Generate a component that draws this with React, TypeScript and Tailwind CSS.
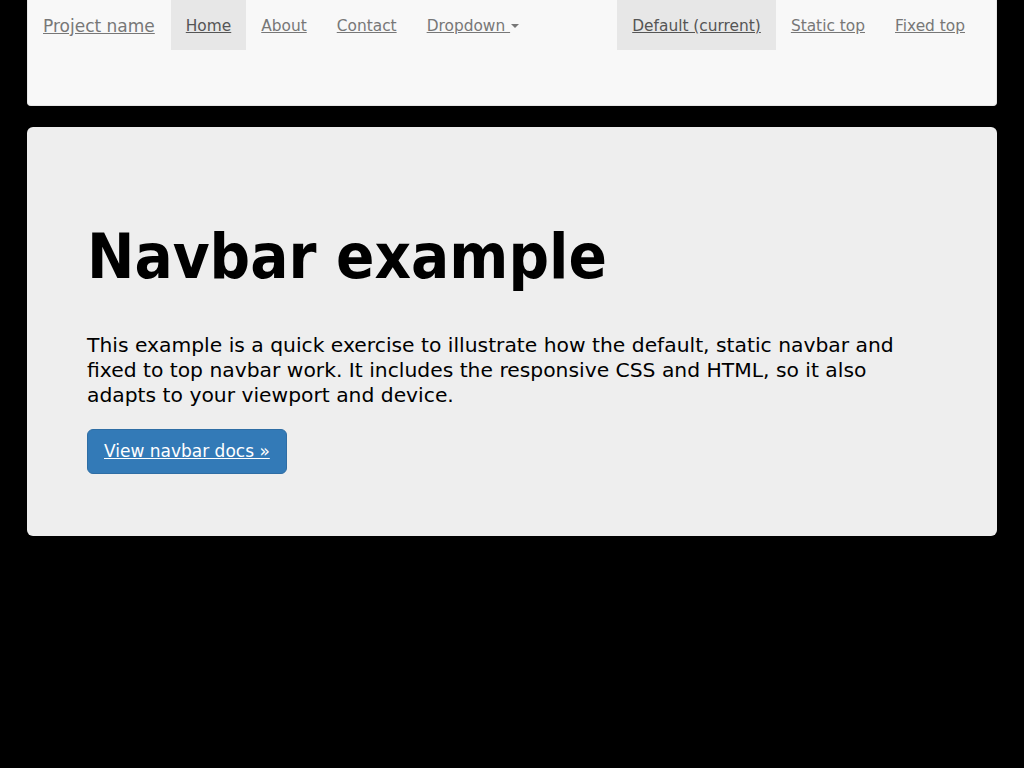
import React from 'react';

const condensed = { fontFamily: '"DejaVu Sans Condensed", "DejaVu Sans", sans-serif' };
const regular = { fontFamily: '"DejaVu Sans", "Liberation Sans", sans-serif' };

const leftLinks = [
  { label: 'Home', active: true },
  { label: 'About' },
  { label: 'Contact' },
];

const rightLinks = [
  { label: 'Default (current)', active: true },
  { label: 'Static top' },
  { label: 'Fixed top' },
];

const NavLink = ({ label, active }: { label: string; active?: boolean }) => (
  <a
    href="#"
    className={`block px-[15px] pt-[16px] pb-[14px] text-[15.4px] leading-[20px] underline ${
      active ? 'bg-[#e7e7e7] text-[#555]' : 'text-[#777]'
    }`}
  >
    {label}
  </a>
);

export default function App() {
  return (
    <div className="min-h-[768px] bg-black" style={regular}>
      <div className="mx-auto w-[970px]">
        {/* navbar */}
        <nav className="h-[106px] rounded-b-[4px] border border-t-0 border-[#e7e7e7] bg-[#f8f8f8]">
          <div className="flex items-start justify-between pl-[15px] pr-[15px]">
            <div className="flex items-start">
              <a href="#" className="block pt-[16px] pb-[14px] pr-[16px] text-[17px] leading-[20px] text-[#777] underline">
                Project name
              </a>
              <ul className="flex">
                {leftLinks.map(l => (
                  <li key={l.label}>
                    <NavLink {...l} />
                  </li>
                ))}
                <li>
                  <a href="#" className="flex items-center px-[15px] pt-[16px] pb-[14px] text-[15.4px] leading-[20px] text-[#777] underline">
                    Dropdown&nbsp;
                    <span className="ml-[1px] inline-block h-0 w-0 border-x-[4px] border-t-[4px] border-x-transparent border-t-[#777]" />
                  </a>
                </li>
              </ul>
            </div>
            <ul className="mr-[1px] flex">
              {rightLinks.map(l => (
                <li key={l.label}>
                  <NavLink {...l} />
                </li>
              ))}
            </ul>
          </div>
        </nav>

        {/* jumbotron */}
        <div className="mt-[21px] h-[409px] rounded-[6px] bg-[#eee] px-[60px] pt-[95px] text-black">
          <h1 className="text-[63px] font-bold leading-[69px]" style={condensed}>
            Navbar example
          </h1>
          <p className="mt-[42px] text-[20.3px] leading-[25px]">
            This example is a quick exercise to illustrate how the default, static navbar and fixed to top navbar
            work. It includes the responsive CSS and HTML, so it also adapts to your viewport and device.
          </p>
          <p className="mt-[21px]">
            <a
              href="#"
              className="inline-block rounded-[6px] border border-[#2e6da4] bg-[#337ab7] px-[16px] py-[10px] text-[17px] leading-[23px] text-white underline"
            >
              View navbar docs »
            </a>
          </p>
        </div>
      </div>
    </div>
  );
}
